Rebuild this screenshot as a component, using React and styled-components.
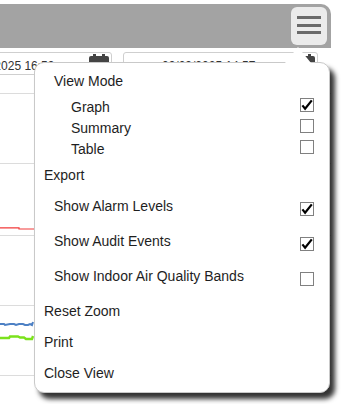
import React from 'react'
import styled, { createGlobalStyle } from 'styled-components'

const GlobalStyle = createGlobalStyle`
  html, body {
    margin: 0;
    padding: 0;
    background: #fff;
  }
  body {
    font-family: "Liberation Sans", Arial, sans-serif;
  }
`

const Stage = styled.div`
  position: relative;
  width: 342px;
  height: 404px;
  overflow: hidden;
  padding-top: 4px;
  box-sizing: border-box;
`

const Panel = styled.div`
  width: 331px;
  display: flex;
  flex-direction: column;
`

const TitleBar = styled.div`
  height: 44px;
  background: #a3a3a3;
  border-top-right-radius: 10px;
  display: flex;
  align-items: center;
  justify-content: flex-end;
  padding-right: 4px;
`

const MenuButton = styled.div`
  width: 36px;
  height: 38px;
  box-sizing: border-box;
  border-radius: 6px;
  background: #ebebeb;
  display: flex;
  flex-direction: column;
  align-items: center;
  padding-top: 9px;
  gap: 4.3px;

  span {
    display: block;
    width: 24px;
    height: 3.3px;
    background: #6a6a6a;
  }
`

const DateRow = styled.div`
  display: flex;
  justify-content: flex-end;
  gap: 11px;
  padding: 4px 13px 5px 0;
  overflow: hidden;
`

const DateField = styled.div`
  flex: none;
  width: ${p => p.$width}px;
  height: 23px;
  box-sizing: border-box;
  border: 1px solid #cfcfcf;
  border-radius: 3px;
  display: flex;
  align-items: center;
  padding: 0 2px 0 ${p => p.$pad}px;
  font-size: 12px;
  color: #333;
  background: #fff;

  span {
    padding-top: 4px;
  }

  svg {
    margin-left: auto;
    align-self: flex-start;
    margin-top: 1px;
  }
`

const Chart = styled.svg`
  display: block;
  width: 331px;
  height: 324px;
`

const Menu = styled.div`
  position: absolute;
  left: 34px;
  top: 62px;
  width: 296px;
  height: 331px;
  box-sizing: border-box;
  background: #fff;
  border: 1px solid #c9c9c9;
  border-radius: 10px;
  box-shadow: 5px 6px 5px rgba(0, 0, 0, 0.8);
  padding: 6px 0 4px;
  font-size: 14px;
  color: #1e1e1e;

  &::before {
    content: '';
    position: absolute;
    top: -16px;
    left: 250px;
    border-left: 13px solid transparent;
    border-right: 13px solid transparent;
    border-bottom: 16px solid #fff;
  }
`

const SubList = styled.div`
  padding-top: 3px;
`

const MenuRow = styled.div`
  height: ${p => p.$height}px;
  display: flex;
  align-items: center;
  padding: 0 15px 0 ${p => p.$indent}px;
`

const Label = styled.span`
  padding-bottom: ${p => p.$lift || 0}px;
`

const Check = styled.span`
  width: 14px;
  height: 14px;
  box-sizing: border-box;
  border: 1px solid #808080;
  background: #fff;
  margin-left: auto;
  margin-top: ${p => (p.$nudge > 0 ? p.$nudge : 0)}px;
  margin-bottom: ${p => (p.$nudge < 0 ? -p.$nudge : 0)}px;
  display: flex;
  align-items: center;
  justify-content: center;
`

const CalendarIcon = () => (
  <svg width="20" height="18" viewBox="0 0 20 18">
    <rect x="0" y="2" width="20" height="16" rx="2" fill="#444" />
    <rect x="4" y="0" width="3" height="4" fill="#444" />
    <rect x="13" y="0" width="3" height="4" fill="#444" />
  </svg>
)

const Box = ({ on, nudge }) => (
  <Check $nudge={nudge}>
    {on && (
      <svg width="12" height="12" viewBox="0 0 12 12">
        <path d="M1.4 6.4 L4.1 9.8 L10.8 1.4" fill="none" stroke="#000" strokeWidth="2.2" />
      </svg>
    )}
  </Check>
)

const viewModes = [
  { label: 'Graph', on: true },
  { label: 'Summary', on: false },
  { label: 'Table', on: false },
]

const toggles = [
  { label: 'Show Alarm Levels', on: true },
  { label: 'Show Audit Events', on: true },
  { label: 'Show Indoor Air Quality Bands', on: false },
]

const actions = ['Reset Zoom', 'Print', 'Close View']

const grid = [13, 83, 155, 225, 295]

export default function App() {
  return (
    <>
      <GlobalStyle />
      <Stage>
        <Panel>
          <TitleBar>
            <MenuButton>
              <span />
              <span />
              <span />
            </MenuButton>
          </TitleBar>
          <DateRow>
            <DateField $width={160} $pad={8}>
              <span>09/09/2025 16:59</span>
              <CalendarIcon />
            </DateField>
            <DateField $width={195} $pad={38}>
              <span>09/09/2025 14:57</span>
              <CalendarIcon />
            </DateField>
          </DateRow>
          <Chart viewBox="0 0 331 324">
            {grid.map(y => (
              <line key={y} x1="0" x2="331" y1={y + 0.5} y2={y + 0.5} stroke="#dcdcdc" />
            ))}
            <polyline points="0,147.8 19,147.8 19,149 40,149" fill="none" stroke="#f23a3a" strokeWidth="1.2" />
            <polyline
              points="0,244 4,244 5,245 10,244 14,244 16,245 19,244 23,244 25,245 28,245 30,244 32,245 33,242"
              fill="none"
              stroke="#4d80c4"
              strokeWidth="2"
            />
            <polyline
              points="0,258 9,258 10,256.5 18,256.5 20,257.5 24,257.5 26,259 32,259 33,256"
              fill="none"
              stroke="#7be21c"
              strokeWidth="2.4"
            />
          </Chart>
        </Panel>

        <Menu>
          <MenuRow $height={24} $indent={19}>
            <Label>View Mode</Label>
          </MenuRow>
          <SubList>
            {viewModes.map(m => (
              <MenuRow key={m.label} $height={21} $indent={36}>
                <Label>{m.label}</Label>
                <Box on={m.on} nudge={-4} />
              </MenuRow>
            ))}
          </SubList>
          <MenuRow $height={31} $indent={9}>
            <Label>Export</Label>
          </MenuRow>
          {toggles.map(t => (
            <MenuRow key={t.label} $height={35} $indent={19}>
              <Label $lift={3}>{t.label}</Label>
              <Box on={t.on} nudge={3} />
            </MenuRow>
          ))}
          {actions.map(a => (
            <MenuRow key={a} $height={31} $indent={9}>
              <Label>{a}</Label>
            </MenuRow>
          ))}
        </Menu>
      </Stage>
    </>
  )
}
